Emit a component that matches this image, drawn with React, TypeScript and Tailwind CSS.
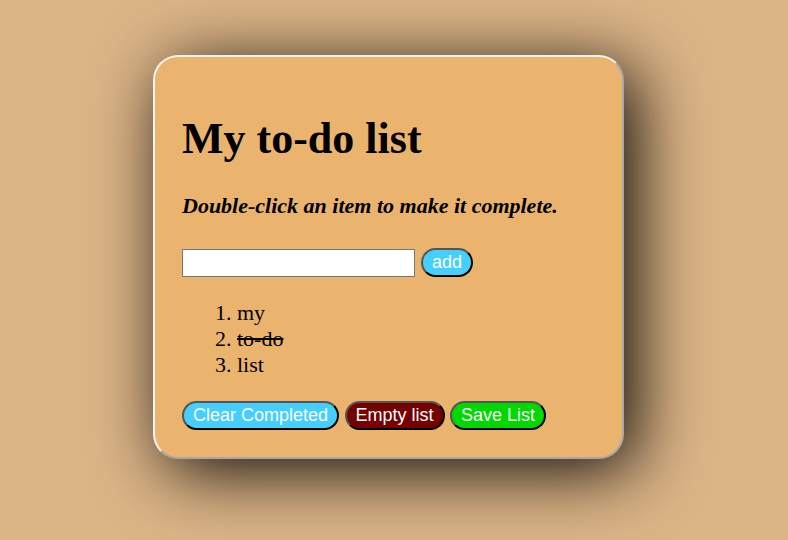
const items = [
  { text: "my", done: false },
  { text: "to-do", done: true },
  { text: "list", done: false },
];

const btn =
  "rounded-full border-2 border-solid border-t-[#555] border-l-[#555] border-r-black border-b-black px-[9px] py-[2px] text-[18px] leading-[21px] text-white font-['Liberation_Sans',Arial,sans-serif]";

export default function App() {
  return (
    <div className="min-h-[540px] w-full bg-[#dcb587] pl-[153px] pt-[55px] font-['Liberation_Serif','Times_New_Roman',serif] text-black">
      <div className="w-[471px] rounded-[25px] border-2 border-t-[#f2f2f2] border-l-[#f2f2f2] border-r-[#a8a8a8] border-b-[#a8a8a8] bg-[#eab36e] p-[27px] shadow-[12px_12px_70px_rgba(0,0,0,0.95)]">
        <h1 className="my-[29px] text-[44px] font-bold leading-[normal]">My to-do list</h1>
        <p className="text-[22px] font-bold italic leading-[normal]">Double-click an item to make it complete.</p>

        <div className="mt-[29px] flex items-center gap-[6px]">
          <input className="h-[28px] w-[233px] border border-[#767676] bg-white px-1 text-[16px] outline-none" />
          <button className={`${btn} bg-[#45cffe]`}>add</button>
        </div>

        <ol className="mt-[23px] list-decimal pl-[55px] text-[22px] leading-[26px]">
          {items.map((it) => (
            <li key={it.text} className={it.done ? "line-through" : ""}>
              {it.text}
            </li>
          ))}
        </ol>

        <div className="mt-[23px] flex gap-[5.5px]">
          <button className={`${btn} bg-[#45cffe]`}>Clear Completed</button>
          <button className={`${btn} bg-[#740000]`}>Empty list</button>
          <button className={`${btn} bg-[#00d800]`}>Save List</button>
        </div>
      </div>
    </div>
  );
}
